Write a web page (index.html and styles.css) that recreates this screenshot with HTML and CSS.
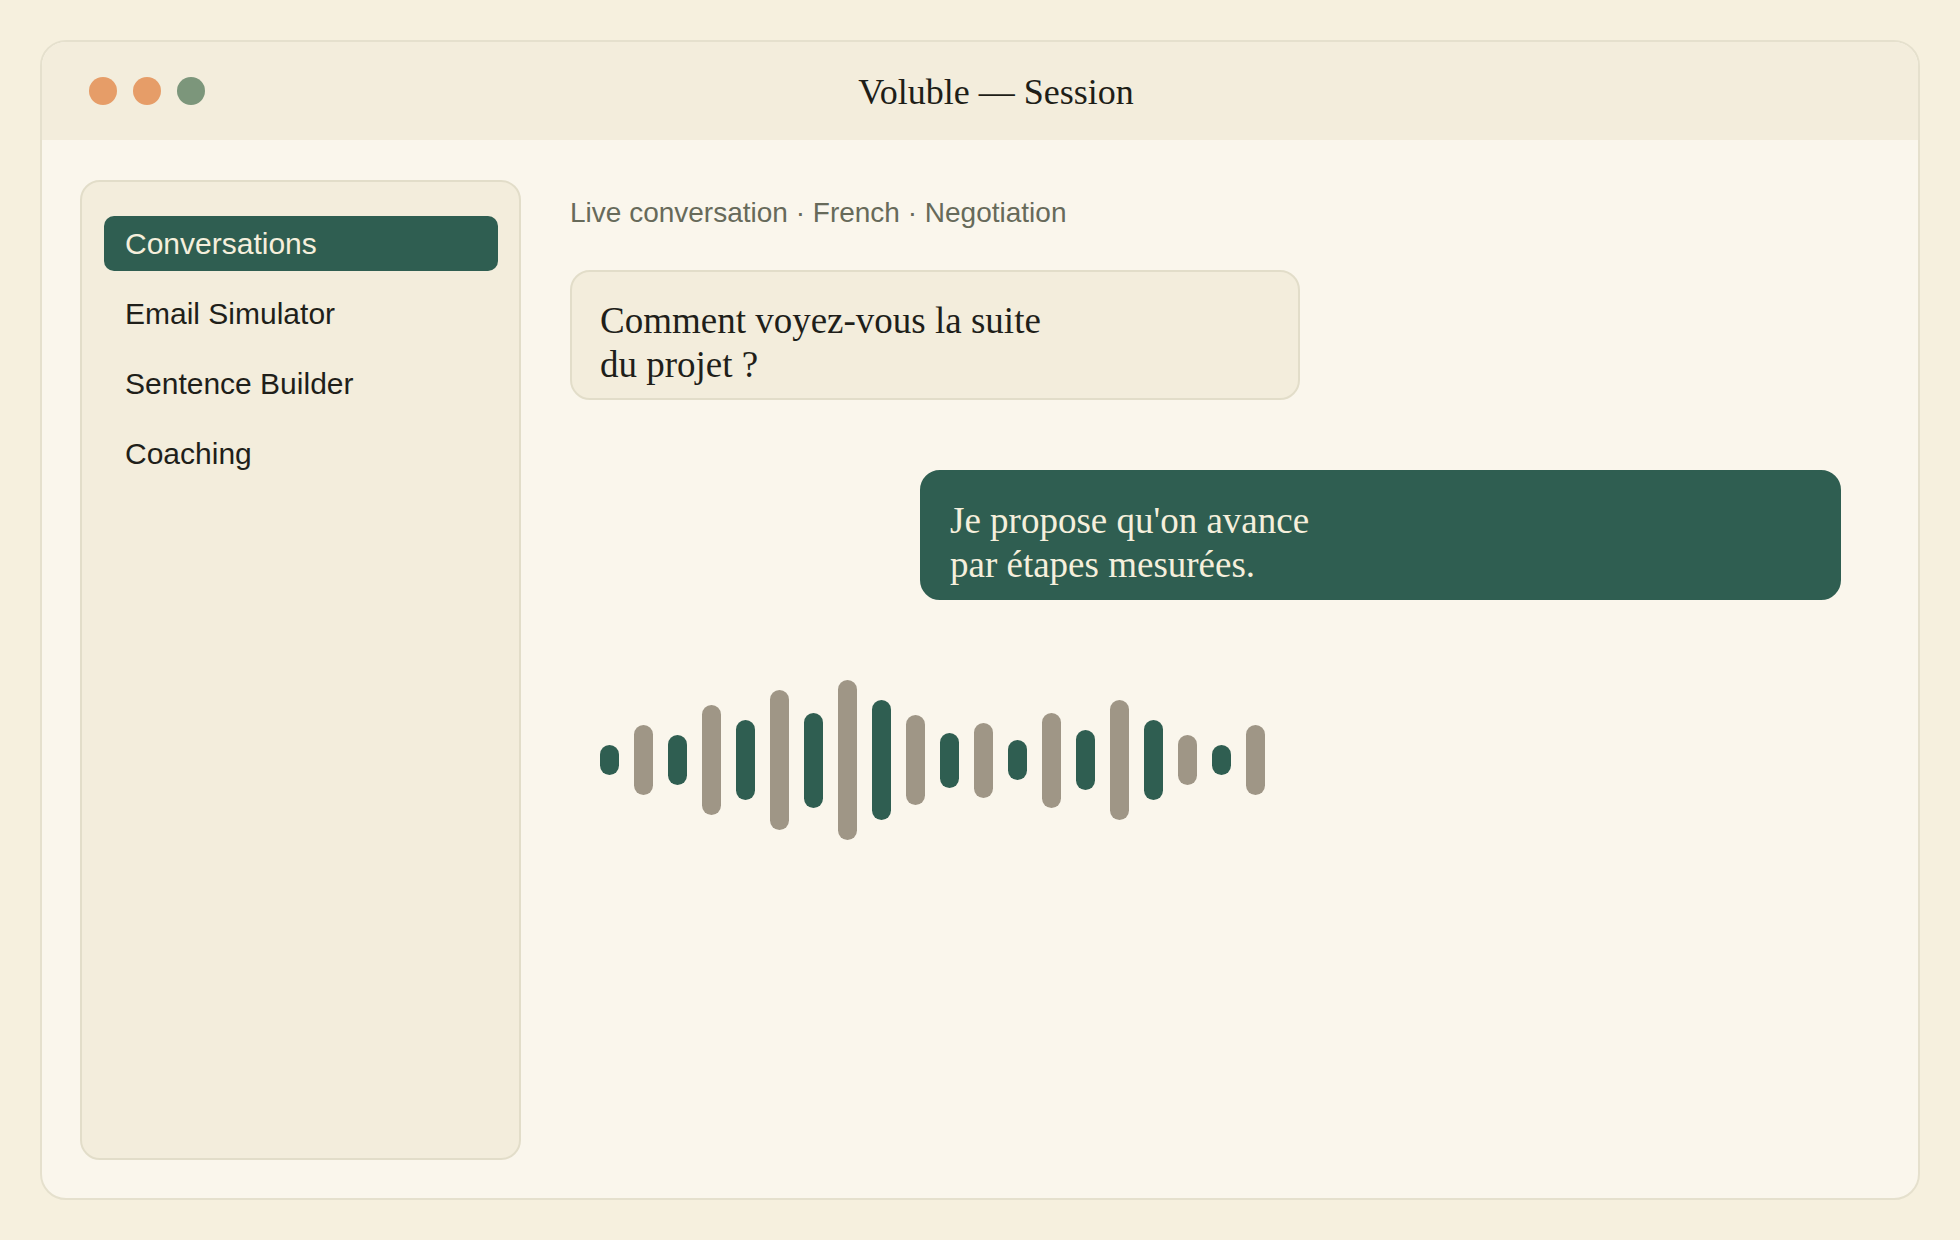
FILE: index.html
```html
<!DOCTYPE html>
<html>
<head>
  <title>Voluble — Session</title>
  <meta name="viewport" content="width=device-width, initial-scale=1.0">
  <link rel="stylesheet" href="styles.css">
</head>
<body>

  <div class="window">
    <div class="titlebar">
      <div class="dots">
        <span class="dot orange"></span>
        <span class="dot orange"></span>
        <span class="dot green"></span>
      </div>
      <div class="title">Voluble — Session</div>
    </div>

    <div class="window-body">
      <nav class="sidebar">
        <a href="#" class="nav-item active">Conversations</a>
        <a href="#" class="nav-item">Email Simulator</a>
        <a href="#" class="nav-item">Sentence Builder</a>
        <a href="#" class="nav-item">Coaching</a>
      </nav>

      <main class="session">
        <div class="subtitle">Live conversation · French · Negotiation</div>

        <div class="bubble incoming">Comment voyez-vous la suite<br>du projet ?</div>
        <div class="bubble outgoing">Je propose qu'on avance<br>par étapes mesurées.</div>

        <div class="waveform" id="waveform"></div>
      </main>
    </div>
  </div>

  <script>
    const heights = [30, 70, 50, 110, 80, 140, 95, 160, 120, 90, 55, 75, 40, 95, 60, 120, 80, 50, 30, 70];
    const wave = document.getElementById('waveform');

    heights.forEach((h, i) => {
      const bar = document.createElement('span');
      bar.className = i % 2 === 0 ? 'bar dark' : 'bar muted';
      bar.style.height = h + 'px';
      wave.appendChild(bar);
    });
  </script>
</body>
</html>
```

FILE: styles.css
```css
* {
  margin: 0;
  padding: 0;
  box-sizing: border-box;
}

html, body {
  height: 100%;
}

body {
  background-color: #f6f0de;
  padding: 40px;
  font-family: "Liberation Sans", Arial, sans-serif;
  color: #1f1f1a;
}

.window {
  height: 100%;
  display: flex;
  flex-direction: column;
  background-color: #faf6ec;
  border: 2px solid #e5e0cd;
  border-radius: 26px;
  overflow: hidden;
}

.titlebar {
  height: 98px;
  display: flex;
  align-items: center;
  padding: 2px 131px 0 47px;
  background-color: #f3eddc;
}

.dots {
  display: flex;
  gap: 16px;
  margin-top: -2px;
}

.dot {
  width: 28px;
  height: 28px;
  border-radius: 50%;
}

.dot.orange {
  background-color: #e69d68;
}

.dot.green {
  background-color: #7c967b;
}

.title {
  flex: 1;
  text-align: center;
  font-family: "Liberation Serif", "Times New Roman", serif;
  font-size: 36px;
  color: #1e1e18;
}

.window-body {
  flex: 1;
  display: flex;
  gap: 49px;
  padding: 40px 77px 38px 38px;
}

.sidebar {
  width: 441px;
  flex-shrink: 0;
  display: flex;
  flex-direction: column;
  gap: 15px;
  padding: 34px 21px 34px 22px;
  background-color: #f3eddc;
  border: 2px solid #e2ddc9;
  border-radius: 20px;
}

.nav-item {
  display: block;
  height: 55px;
  line-height: 55px;
  padding: 0 21px;
  border-radius: 10px;
  font-size: 30px;
  color: #1f1f1a;
  text-decoration: none;
}

.nav-item.active {
  background-color: #2f5e51;
  color: #f5efdc;
}

.session {
  flex: 1;
  display: flex;
  flex-direction: column;
  padding-top: 17px;
}

.subtitle {
  font-size: 28px;
  line-height: 32px;
  color: #676a5a;
  margin-bottom: 41px;
}

.bubble {
  height: 130px;
  padding: 27px 30px 0 28px;
  border: 2px solid;
  border-radius: 20px;
  font-family: "Liberation Serif", "Times New Roman", serif;
  font-size: 37px;
  line-height: 44px;
}

.bubble.incoming {
  width: 730px;
  background-color: #f3eddc;
  border-color: #e2ddc9;
  color: #1f1f1a;
}

.bubble.outgoing {
  width: 921px;
  align-self: flex-end;
  margin-top: 70px;
  background-color: #2f5e51;
  border-color: #2f5e51;
  color: #f5efdc;
}

.waveform {
  height: 160px;
  margin-top: 80px;
  padding-left: 30px;
  display: flex;
  align-items: center;
  gap: 15px;
}

.bar {
  width: 19px;
  border-radius: 10px;
}

.bar.dark {
  background-color: #2f5e51;
}

.bar.muted {
  background-color: #9f9686;
}
```
